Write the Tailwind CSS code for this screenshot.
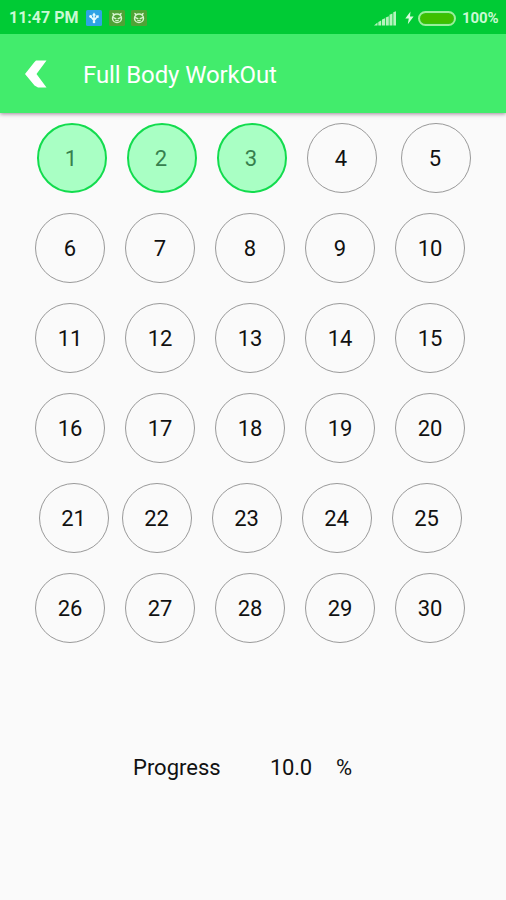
<!DOCTYPE html>
<html lang="en">
<head>
<meta charset="utf-8">
<title>Full Body WorkOut</title>
<script src="https://cdn.jsdelivr.net/npm/@tailwindcss/browser@4"></script>
</head>
<body class="bg-[#fafafa] font-[Roboto,sans-serif] text-[#111]">
<div class="flex h-[900px] w-[506px] flex-col overflow-hidden">
  <div class="z-20 flex h-[34px] shrink-0 items-center bg-[#00cb35] pt-[2px] pl-[9px] text-[#c9fad3]">
    <span class="w-[77px] text-[16px] leading-none font-bold whitespace-nowrap">11:47 PM</span>
    <svg class="h-4 w-4" viewBox="0 0 16 16"><rect width="16" height="16" rx="1.5" fill="#2fa3e6"/><path d="M8 13V4M4.500 6.300 8 10.500l3.500-4.200" fill="none" stroke="#e8fbff" stroke-width="1.600"/><path d="M8 2.500 10 5.500H6z" fill="#e8fbff"/><circle cx="4.600" cy="6.500" r="1.400" fill="#e8fbff"/><path d="M10.200 5.300h2.500v2.500h-2.500z" fill="#e8fbff"/><circle cx="8" cy="12" r="1.300" fill="#e8fbff"/></svg>
    <svg class="ml-[7px] h-4 w-4" viewBox="0 0 16 16"><rect width="16" height="16" rx="1.500" fill="#4fa336"/><path d="M3 2.800 5 3.300 5.800 5H4zM13 2.800 11 3.300 10.200 5H12z" fill="#d6f5cf"/><ellipse cx="8" cy="8.300" rx="4.500" ry="4.300" fill="none" stroke="#d6f5cf" stroke-width="1.400"/><path d="M4 7.300 7.300 8.800M12 7.300 8.700 8.800M6.300 10.600h3.400" stroke="#d6f5cf" stroke-width="1.300"/></svg>
    <svg class="ml-[6px] h-4 w-4" viewBox="0 0 16 16"><rect width="16" height="16" rx="1.500" fill="#4fa336"/><path d="M3 2.800 5 3.300 5.800 5H4zM13 2.800 11 3.300 10.200 5H12z" fill="#d6f5cf"/><ellipse cx="8" cy="8.300" rx="4.500" ry="4.300" fill="none" stroke="#d6f5cf" stroke-width="1.400"/><path d="M4 7.300 7.300 8.800M12 7.300 8.700 8.800M6.300 10.600h3.400" stroke="#d6f5cf" stroke-width="1.300"/></svg>
    <svg class="ml-[227px] h-[15px] w-[23px]" viewBox="0 0 23 15" fill="#b5f3bd"><path d="M0 14.500 3.500 11.500v3zM4.300 14.500V11L7.200 9.500v5zM8 14.500V8.500l3-1.300v7.300zM11.800 14.500V6.500l3-1.300v9.300zM15.500 14.500V3.700l3-1.300v12.100zM19.300 14.500V1.200L22 .2v14.300z"/></svg>
    <svg class="ml-[8px] h-[14px] w-[9px]" viewBox="0 0 9 14"><path d="M5.500.5.300 7.600h3.500L2.800 13.300 8.600 5.600H5z" fill="#d9fbdd"/></svg>
    <div class="ml-[4px] h-[15px] w-[38px] rounded-full border-2 border-[#9aef9a] bg-[#35c414] p-px"><div class="h-full rounded-full bg-[#3fbf00]"></div></div>
    <span class="ml-[6px] text-[15px] leading-none font-bold tracking-[-0.1px]">100%</span>
  </div>
  <div class="z-10 flex h-[79px] shrink-0 items-center bg-[#42ec6c] pl-[25px] text-white shadow-[0_1px_4px_rgba(70,20,60,0.5)]">
    <svg class="h-7 w-[22px]" viewBox="0 0 22 28" fill="#fff"><path d="M11 .5H21.500L11.500 14 21.500 27.500H13L9.500 25.500 0 14 9.500 2z"/></svg>
    <h1 class="ml-[36px] pt-[2px] text-[24px] leading-7 font-normal tracking-[-0.12px] whitespace-nowrap">Full Body WorkOut</h1>
  </div>
  <main class="pt-[10px] text-[22px] [&_span]:flex [&_span]:size-[70px] [&_span]:shrink-0 [&_span]:items-center [&_span]:justify-center [&_span]:rounded-full [&_span]:border [&_span]:border-[#999] [&_span]:pt-[1px]">
    <div class="flex flex-col gap-[20px]">
      <div class="flex gap-[20px] pl-[36.5px] [&_span]:pr-[1px]">
        <span class="border-2! border-[#12dc4e]! bg-[#a9ffc4] text-[#37804e]">1</span><span class="border-2! border-[#12dc4e]! bg-[#a9ffc4] text-[#37804e]">2</span><span class="border-2! border-[#12dc4e]! bg-[#a9ffc4] text-[#37804e]">3</span><span>4</span><span class="ml-[4px]">5</span>
      </div>
      <div class="flex gap-[20px] pl-[35px]"><span>6</span><span>7</span><span>8</span><span>9</span><span>10</span></div>
      <div class="flex gap-[20px] pl-[35px]"><span>11</span><span>12</span><span>13</span><span>14</span><span>15</span></div>
      <div class="flex gap-[20px] pl-[35px]"><span>16</span><span>17</span><span>18</span><span>19</span><span>20</span></div>
      <div class="flex gap-[20px] pl-[38.500px]"><span class="-mr-[7px]">21</span><span>22</span><span>23</span><span>24</span><span>25</span></div>
      <div class="flex gap-[20px] pl-[35px]"><span>26</span><span>27</span><span>28</span><span>29</span><span>30</span></div>
    </div>
  </main>
  <div class="mt-[110px] flex pl-[133px] text-[22px] leading-[30px]">
    <div class="w-[137px]">Progress</div>
    <div class="w-[66px] tracking-[-0.3px]">10.0</div>
    <div>%</div>
  </div>
</div>
</body>
</html>
